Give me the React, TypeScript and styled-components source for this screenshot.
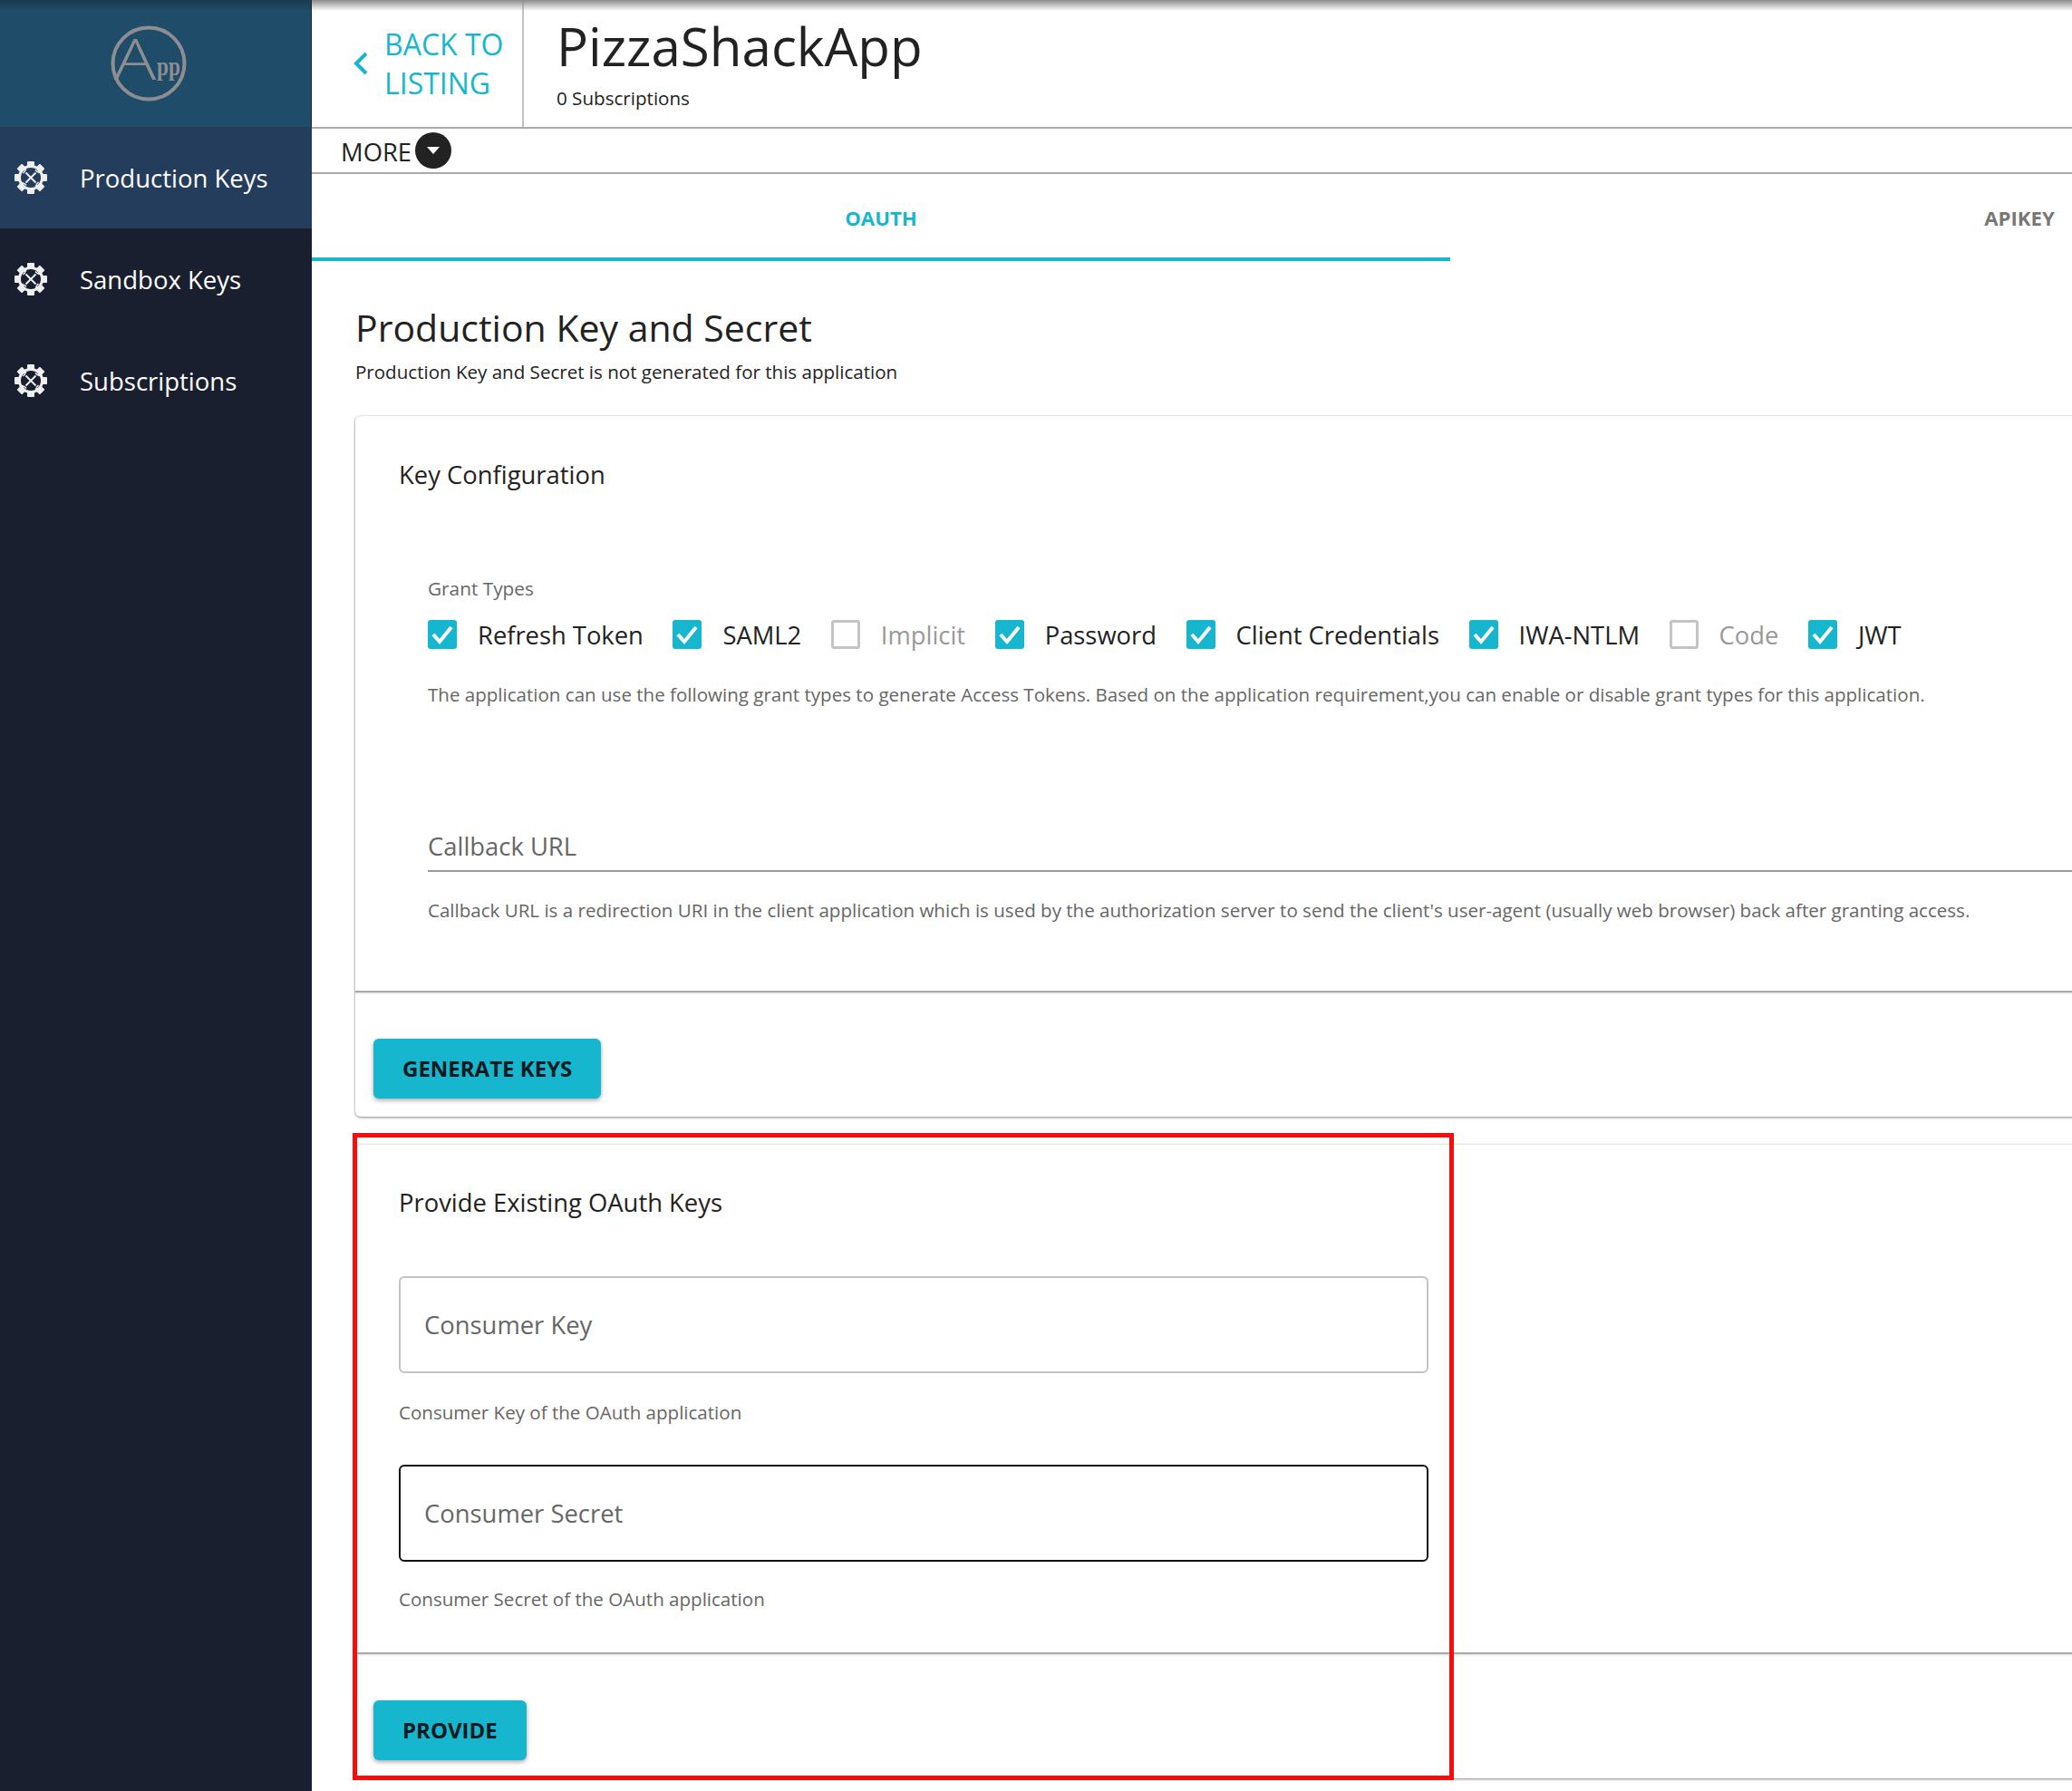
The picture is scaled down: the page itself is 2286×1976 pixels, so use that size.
import React from 'react';
import styled, {createGlobalStyle} from 'styled-components';

const GlobalStyle = createGlobalStyle`
  html, body {
    margin: 0;
    padding: 0;
    background: white;
    font-family: "Open Sans", "Noto Sans", sans-serif;
    overflow: hidden;
  }
  * { box-sizing: border-box; }
`;

const Page = styled.div`
  display: flex;
  width: 2286px;
  height: 1976px;
  overflow: hidden;
`;

const Sidebar = styled.aside`
  width: 344px;
  flex: none;
  background: #191f2f;
`;

const LogoBox = styled.div`
  height: 140px;
  display: flex;
  justify-content: center;
  padding-top: 28px;
  padding-right: 16px;
  background: linear-gradient(#1c3a50 0, #1f4c69 12px);
  border-right: 1px solid #16283a;
`;

const NavItem = styled.div<{$active?: boolean}>`
  height: 112px;
  display: flex;
  align-items: center;
  padding-left: 16px;
  gap: 36px;
  color: white;
  font-size: 27.5px;
  background: ${p => p.$active ? '#253d5c' : 'transparent'};
`;

const Main = styled.main`
  flex: 1;
  min-width: 0;
  overflow: hidden;
  position: relative;
`;

const TopShade = styled.div`
  position: absolute;
  top: 0;
  left: 0;
  right: 0;
  height: 12px;
  background: linear-gradient(#8c8c8c, rgba(255,255,255,0));
`;

const Header = styled.header`
  height: 142px;
  display: flex;
  border-bottom: 2px solid #aaa;
`;

const BackLink = styled.div`
  width: 234px;
  display: flex;
  align-items: center;
  padding-left: 46px;
  gap: 18px;
  color: #17b6cf;
  font-size: 32px;
  line-height: 43px;
  border-right: 2px solid #c4c4c4;
`;

const TitleBlock = styled.div`
  padding: 11px 0 0 36px;
`;

const AppTitle = styled.h1`
  margin: 0;
  font-size: 58.3px;
  line-height: 80px;
  font-weight: 400;
  color: #222;
`;

const Subscriptions = styled.div`
  font-size: 20.6px;
  line-height: 28px;
  margin-top: 3px;
  color: #222;
`;

const MoreRow = styled.div`
  height: 50px;
  display: flex;
  align-items: center;
  padding-left: 32px;
  gap: 4px;
  font-size: 27.4px;
  color: #222;
  border-bottom: 2px solid #aaa;
`;

const MoreLabel = styled.span`
  padding-top: 2px;
`;

const MoreButton = styled.span`
  width: 40px;
  height: 40px;
  border-radius: 50%;
  background: #222;
  display: flex;
  align-items: center;
  justify-content: center;
  &::after {
    content: '';
    border-left: 7px solid transparent;
    border-right: 7px solid transparent;
    border-top: 8px solid white;
  }
`;

const Tabs = styled.div`
  display: flex;
  width: 2512px;
  height: 96px;
`;

const Tab = styled.div<{$active?: boolean}>`
  width: 1256px;
  display: flex;
  align-items: center;
  justify-content: center;
  padding-top: 4px;
  font-size: 22.2px;
  font-weight: 700;
  color: ${p => p.$active ? '#17b6cf' : '#777'};
  border-bottom: 4px solid ${p => p.$active ? '#17b6cf' : 'transparent'};
`;

const Content = styled.div`
  width: 2512px;
  padding: 47px 0 0 48px;
`;

const SectionTitle = styled.h2`
  margin: 0;
  font-size: 41px;
  line-height: 52px;
  font-weight: 400;
  color: #222;
`;

const SectionNote = styled.p`
  margin: 8px 0 0;
  font-size: 20.55px;
  line-height: 30px;
  color: #222;
`;

const Card = styled.section`
  background: white;
  border-radius: 6px;
  box-shadow: 0 1px 3px rgba(0,0,0,.45), 0 0 2px rgba(0,0,0,.12);
`;

const KeyCard = styled(Card)`
  margin-top: 34px;
  height: 773px;
`;

const ExistingCard = styled(Card)`
  height: 699px;
`;

const ExistingWrap = styled.div`
  position: relative;
  margin-top: 31px;
`;

const RedFrame = styled.div`
  position: absolute;
  left: -3px;
  top: -13px;
  width: 1215px;
  height: 714px;
  border: 5px solid #f80c0c;
  pointer-events: none;
`;

const CardBody = styled.div<{$height: number; $top: number}>`
  height: ${p => p.$height}px;
  padding: ${p => p.$top}px 48px 0;
  border-bottom: 2px solid #aaa;
  box-shadow: 0 1px 2px rgba(0,0,0,.15);
`;

const CardTitle = styled.h3`
  margin: 0;
  font-size: 27.4px;
  line-height: 38px;
  font-weight: 400;
  color: #222;
`;

const CardFooter = styled.div`
  padding: 51px 20px 0;
`;

const ActionButton = styled.button`
  display: block;
  height: 66px;
  padding: 0 32px 2px;
  border: none;
  border-radius: 6px;
  background: #17b6cf;
  color: #0c1a20;
  font-family: inherit;
  font-size: 24px;
  font-weight: 700;
  box-shadow: 0 2px 5px rgba(0,0,0,.35);
`;

const Group = styled.div`
  padding: 92px 0 0 32px;
`;

const FieldLabel = styled.div`
  font-size: 20.8px;
  line-height: 28px;
  color: #666;
`;

const CheckRow = styled.div`
  display: flex;
  align-items: center;
  margin-top: 15px;
  height: 44px;
`;

const CheckItem = styled.label<{$off?: boolean}>`
  display: flex;
  align-items: center;
  gap: 23px;
  margin-right: 32.6px;
  font-size: 27.35px;
  color: ${p => p.$off ? '#999' : '#222'};
`;

const CheckBox = styled.span<{$on: boolean}>`
  width: 32px;
  height: 32px;
  border-radius: 3px;
  display: flex;
  align-items: center;
  justify-content: center;
  background: ${p => p.$on ? '#17b6cf' : 'white'};
  border: ${p => p.$on ? 'none' : '3px solid #c4c4c4'};
`;

const HelpText = styled.p<{$top: number}>`
  margin: ${p => p.$top}px 0 0;
  font-size: 20.55px;
  line-height: 28px;
  color: #666;
  white-space: nowrap;
`;

const UnderlineField = styled.div`
  margin-top: 133px;
  height: 49px;
  font-size: 27.4px;
  line-height: 42px;
  color: #666;
  border-bottom: 2px solid #999;
`;

const OutlineField = styled.div<{$focus?: boolean; $top?: number}>`
  width: 1136px;
  height: 107px;
  margin-top: ${p => p.$top ?? 0}px;
  display: flex;
  align-items: center;
  padding-left: 26px;
  border-radius: 6px;
  font-size: 27.4px;
  color: #666;
  border: 2px solid ${p => p.$focus ? '#111' : '#c4c4c4'};
`;

const ExistingFields = styled.div`
  margin-top: 62px;
`;

const wrenchEnds = 'M9.5 13 L12 10.5 M12 10.5 L9.5 8 M13 9.5 L10.5 7';

const GearIcon = () => (
    <svg width="36" height="36" viewBox="0 0 36 36">
        <g fill="#eee">
            {[0, 45, 90, 135, 180, 225, 270, 315].map(a => (
                <rect key={a} x="14" y="0" width="8" height="7" rx="1" transform={`rotate(${a} 18 18)`}/>
            ))}
        </g>
        <circle cx="18" cy="18" r="12.5" fill="none" stroke="#eee" strokeWidth="3"/>
        <g stroke="#eee" fill="none" strokeWidth="2">
            <path d="M12.5 12.5 L23.5 23.5"/>
            <path d="M23.5 12.5 L12.5 23.5"/>
            {[0, 90, 180, 270].map(a => (
                <path key={a} d={wrenchEnds} strokeWidth="1.5" transform={`rotate(${a} 18 18)`}/>
            ))}
        </g>
    </svg>
);

const Logo = () => (
    <svg width="84" height="84" viewBox="0 0 84 84" overflow="visible">
        <circle cx="42" cy="42" r="39.5" fill="none" stroke="#8e8e92" strokeWidth="4"/>
        <text x="3" y="60" fontFamily="Open Sans, sans-serif" fontWeight="300" fontSize="62" transform="scale(1.25 1)" fill="#8e8e92">A</text>
        <text x="51" y="55" fontFamily="Liberation Serif, serif" fontWeight="700" fontSize="29" textLength="26" lengthAdjust="spacingAndGlyphs" fill="#8e8e92">pp</text>
    </svg>
);

const Check = () => (
    <svg width="26" height="26" viewBox="0 0 26 26" fill="none">
        <path d="M3 13 L10 21 L23 5" stroke="white" strokeWidth="4"/>
    </svg>
);

const grants = [
    {name: 'Refresh Token', on: true},
    {name: 'SAML2', on: true},
    {name: 'Implicit', on: false},
    {name: 'Password', on: true},
    {name: 'Client Credentials', on: true},
    {name: 'IWA-NTLM', on: true},
    {name: 'Code', on: false},
    {name: 'JWT', on: true},
];

const navItems = ['Production Keys', 'Sandbox Keys', 'Subscriptions'];

function App() {
    return (
        <Page>
            <GlobalStyle/>
            <Sidebar>
                <LogoBox><Logo/></LogoBox>
                {navItems.map((n, i) => (
                    <NavItem key={n} $active={i === 0}>
                        <GearIcon/>
                        {n}
                    </NavItem>
                ))}
            </Sidebar>
            <Main>
                <TopShade/>
                <Header>
                    <BackLink>
                        <svg width="16" height="26" viewBox="0 0 16 26" fill="none">
                            <path d="M14 2 L3 13 L14 24" stroke="#17b6cf" strokeWidth="4"/>
                        </svg>
                        <span>BACK TO<br/>LISTING</span>
                    </BackLink>
                    <TitleBlock>
                        <AppTitle>PizzaShackApp</AppTitle>
                        <Subscriptions>0 Subscriptions</Subscriptions>
                    </TitleBlock>
                </Header>
                <MoreRow><MoreLabel>MORE</MoreLabel><MoreButton/></MoreRow>
                <Tabs>
                    <Tab $active>OAUTH</Tab>
                    <Tab>APIKEY</Tab>
                </Tabs>
                <Content>
                    <SectionTitle>Production Key and Secret</SectionTitle>
                    <SectionNote>Production Key and Secret is not generated for this application</SectionNote>
                    <KeyCard>
                        <CardBody $height={636} $top={46}>
                            <CardTitle>Key Configuration</CardTitle>
                            <Group>
                                <FieldLabel>Grant Types</FieldLabel>
                                <CheckRow>
                                    {grants.map(g => (
                                        <CheckItem key={g.name} $off={!g.on}>
                                            <CheckBox $on={g.on}>{g.on && <Check/>}</CheckBox>
                                            {g.name}
                                        </CheckItem>
                                    ))}
                                </CheckRow>
                                <HelpText $top={30}>The application can use the following grant types to generate Access Tokens. Based on the application requirement,you can enable or disable grant types for this application.</HelpText>
                                <UnderlineField>Callback URL</UnderlineField>
                                <HelpText $top={28}>Callback URL is a redirection URI in the client application which is used by the authorization server to send the client's user-agent (usually web browser) back after granting access.</HelpText>
                            </Group>
                        </CardBody>
                        <CardFooter>
                            <ActionButton>GENERATE KEYS</ActionButton>
                        </CardFooter>
                    </KeyCard>
                    <ExistingWrap>
                        <ExistingCard>
                            <CardBody $height={562} $top={45}>
                                <CardTitle>Provide Existing OAuth Keys</CardTitle>
                                <ExistingFields>
                                    <OutlineField>Consumer Key</OutlineField>
                                    <HelpText $top={29}>Consumer Key of the OAuth application</HelpText>
                                    <OutlineField $focus $top={44}>Consumer Secret</OutlineField>
                                    <HelpText $top={27}>Consumer Secret of the OAuth application</HelpText>
                                </ExistingFields>
                            </CardBody>
                            <CardFooter>
                                <ActionButton>PROVIDE</ActionButton>
                            </CardFooter>
                        </ExistingCard>
                        <RedFrame/>
                    </ExistingWrap>
                </Content>
            </Main>
        </Page>
    );
}

export default App;
